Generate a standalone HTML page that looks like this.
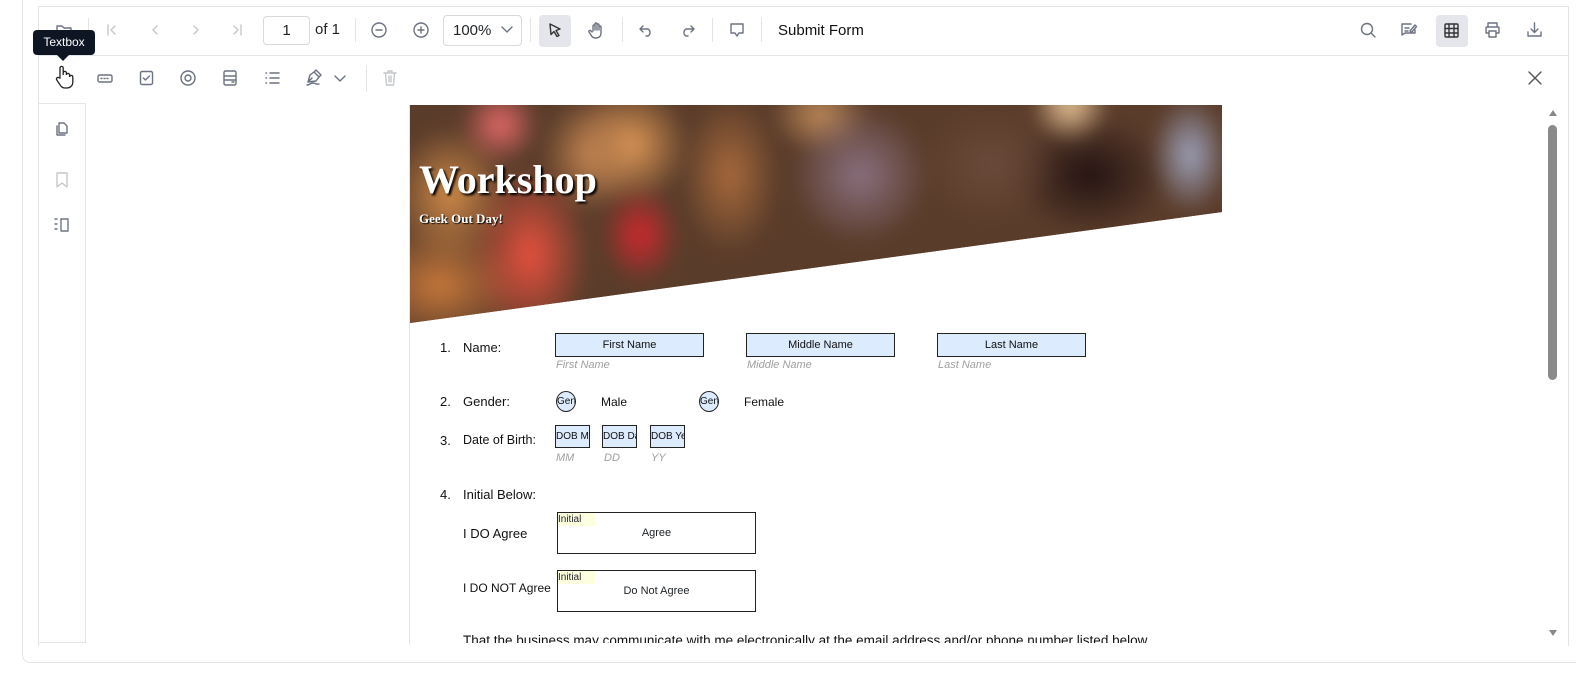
<!DOCTYPE html>
<html style="overflow:hidden"><head><meta charset="utf-8"><style>
*{box-sizing:border-box;margin:0;padding:0}
html,body{width:1576px;height:678px;overflow:hidden}
body{background:#fff;font-family:"Liberation Sans",sans-serif;position:relative;color:#212529}
.a{position:absolute}
.outer{left:22px;top:-10px;width:1554px;height:673px;border:1px solid #e3e4e8;border-right:none;border-radius:8px 0 0 8px}
.viewer{left:38px;top:6px;width:1531px;height:640px;border:1px solid #e3e4e8;border-bottom:none;background:#fff}
.hl{height:1px;background:#e3e4e8}
.vl{width:1px;background:#e3e4e8}
svg{position:absolute}
.ic{stroke:#6b7280;fill:none;stroke-width:1.4;stroke-linecap:round;stroke-linejoin:round}
.dis{stroke:#c4c7cc}
.pdf{font-family:"Liberation Sans",sans-serif;font-size:13px;color:#111}
.fld{position:absolute;background:#dcebfd;border:1px solid #222;font-size:11px;text-align:center;color:#111;white-space:nowrap;overflow:hidden}
.hint{position:absolute;font-size:11px;font-style:italic;color:#a0a0a0}
</style></head><body>
<div class="a outer"></div>
<div class="a viewer"></div>
<div class="a hl" style="left:38px;top:55px;width:1531px"></div>
<div class="a hl" style="left:38px;top:103px;width:48px"></div>
<div class="a vl" style="left:38px;top:103px;height:540px"></div>
<div class="a vl" style="left:85px;top:103px;height:540px"></div>
<div class="a hl" style="left:38px;top:642px;width:48px"></div>

<!-- top toolbar -->
<svg style="left:55px;top:21px" width="18" height="18"><path class="ic" d="M2 5h5l2 2h7v8H2z"/></svg>
<div class="a vl" style="left:88px;top:18px;height:24px"></div>
<svg style="left:104px;top:22px" width="16" height="16"><path class="ic dis" d="M4 3v10M11 4l-4 4 4 4"/></svg>
<svg style="left:147px;top:22px" width="16" height="16"><path class="ic dis" d="M10 4l-4 4 4 4"/></svg>
<svg style="left:188px;top:22px" width="16" height="16"><path class="ic dis" d="M6 4l4 4-4 4"/></svg>
<svg style="left:229px;top:22px" width="16" height="16"><path class="ic dis" d="M5 4l4 4-4 4M12 3v10"/></svg>
<div class="a" style="left:263px;top:16px;width:47px;height:29px;border:1px solid #d7d9dd;border-radius:4px;font-size:15px;text-align:center;line-height:27px">1</div>
<div class="a" style="left:315px;top:21px;font-size:15px">of 1</div>
<div class="a vl" style="left:355px;top:18px;height:24px"></div>
<svg style="left:370px;top:21px" width="18" height="18"><circle class="ic" cx="9" cy="9" r="7"/><path class="ic" d="M6 9h6"/></svg>
<svg style="left:412px;top:21px" width="18" height="18"><circle class="ic" cx="9" cy="9" r="7"/><path class="ic" d="M6 9h6M9 6v6"/></svg>
<div class="a" style="left:443px;top:15px;width:79px;height:31px;border:1px solid #d7d9dd;border-radius:4px;font-size:15px;line-height:29px;padding-left:9px">100%</div>
<svg style="left:500px;top:25px" width="14" height="10"><path class="ic" d="M2 2l5 5 5-5"/></svg>
<div class="a vl" style="left:530px;top:18px;height:24px"></div>
<div class="a" style="left:539px;top:15px;width:32px;height:32px;background:#e5e6ec;border-radius:4px"></div>
<svg style="left:547px;top:22px" width="16" height="18"><path class="ic" style="stroke:#333" d="M3 2l10 5-4 1.5 3 5-2 1-3-5-3 3z"/></svg>
<svg style="left:588px;top:21px" width="18" height="18"><path class="ic" d="M5 10V5a1 1 0 012 0v4V3a1 1 0 012 0v6V4a1 1 0 012 0v5-3a1 1 0 012 0v6c0 3-2 5-5 5s-4-1-5-3l-2-3a1 1 0 012-1l1 1"/></svg>
<div class="a vl" style="left:622px;top:18px;height:24px"></div>
<svg style="left:638px;top:22px" width="16" height="16"><path class="ic" d="M5 4L2 7l3 3M2 7h8a4 4 0 010 7H8"/></svg>
<svg style="left:680px;top:22px" width="16" height="16"><path class="ic" d="M11 4l3 3-3 3M14 7H6a4 4 0 000 7h2"/></svg>
<div class="a vl" style="left:712px;top:18px;height:24px"></div>
<svg style="left:728px;top:21px" width="18" height="18"><path class="ic" d="M3 3h12v9H11l-2 3-2-3H3z"/></svg>
<div class="a vl" style="left:761px;top:18px;height:24px"></div>
<div class="a" style="left:778px;top:22px;font-size:15px;color:#111">Submit Form</div>

<svg style="left:1359px;top:21px" width="18" height="18"><circle class="ic" cx="8" cy="8" r="5.5"/><path class="ic" d="M12 12l4 4"/></svg>
<svg style="left:1400px;top:21px" width="18" height="18"><path class="ic" d="M2 3h9M2 3v11l3-2h10V9M5 7h4M5 10h3M10 10l5-6 1.5 1.5-5 6z"/></svg>
<div class="a" style="left:1436px;top:15px;width:32px;height:32px;background:#e5e6ec;border-radius:4px"></div>
<svg style="left:1443px;top:22px" width="18" height="18"><rect class="ic" style="stroke:#333" x="2" y="2" width="13" height="13" rx="1"/><path class="ic" style="stroke:#333" d="M6 2v13M11 2v13M2 6.5h13M2 11h13"/></svg>
<svg style="left:1484px;top:21px" width="18" height="18"><path class="ic" d="M4 6V2h9v4M3 6h11a1 1 0 011 1v5h-3M5 12H2V7a1 1 0 011-1M5 10h7v6H5z"/></svg>
<svg style="left:1526px;top:21px" width="18" height="18"><path class="ic" d="M8.5 2v9M5 8l3.5 3.5L12 8M2 11v4h13v-4"/></svg>

<!-- second toolbar -->
<svg style="left:52px;top:64px" width="22" height="26"><path d="M8 14V4a1.6 1.6 0 013.2 0v7V9a1.6 1.6 0 013.2 0v2a1.6 1.6 0 013.2 0v2a1.6 1.6 0 013.2 0v5c0 4-3 6-6 6h-2c-3 0-4-2-6-5l-2-3a1.6 1.6 0 012.5-2z" fill="#fff" stroke="#222" stroke-width="1.3"/></svg>
<svg style="left:96px;top:70px" width="18" height="18"><rect class="ic" x="2" y="5" width="14" height="7" rx="1.5"/><path class="ic" d="M5 8.5h1M8 8.5h1M11 8.5h1"/></svg>
<svg style="left:138px;top:69px" width="18" height="18"><rect class="ic" x="2.5" y="2.5" width="12" height="13" rx="1.5"/><path class="ic" d="M5.5 9l2 2 4-4"/></svg>
<svg style="left:179px;top:69px" width="18" height="18"><circle class="ic" cx="9" cy="9" r="7"/><circle class="ic" cx="9" cy="9" r="3"/></svg>
<svg style="left:221px;top:69px" width="18" height="18"><rect class="ic" x="3" y="2" width="12" height="14" rx="1.5"/><path class="ic" d="M3 7h12M3 11h12M11 13h2"/></svg>
<svg style="left:263px;top:69px" width="18" height="18"><path class="ic" d="M7 4h9M7 9h9M7 14h9M3 4h.5M3 9h.5M3 14h.5"/></svg>
<svg style="left:304px;top:68px" width="22" height="20"><path class="ic" d="M4 14l2-7 4-3 5 5-3 4zM10 4l2-2 5 5-2 2M8 10l-4 4M3 17c3 0 3-2 6-2s3 2 6 1"/></svg>
<svg style="left:333px;top:74px" width="14" height="10"><path class="ic" d="M2 2l5 5 5-5"/></svg>
<div class="a vl" style="left:366px;top:66px;height:26px"></div>
<svg style="left:381px;top:69px" width="18" height="18"><path class="ic dis" d="M3 4h12M7 4V2h4v2M4.5 4l1 12h7l1-12M8 7v6M10 7v6"/></svg>
<svg style="left:1526px;top:69px" width="18" height="18"><path class="ic" style="stroke:#555" d="M3 3l12 12M15 3L3 15"/></svg>

<!-- tooltip -->
<div class="a" style="left:33px;top:30px;width:62px;height:25px;background:#0f1623;border-radius:4px;color:#fff;font-size:12px;text-align:center;line-height:25px">Textbox</div>
<div class="a" style="left:57px;top:55px;width:0;height:0;border-left:6px solid transparent;border-right:6px solid transparent;border-top:6px solid #0f1623"></div>

<!-- sidebar icons -->
<svg style="left:53px;top:120px" width="18" height="18"><path class="ic" d="M6 3h5l3 3v7H6zM4 6v9h8"/></svg>
<svg style="left:53px;top:171px" width="18" height="18"><path class="ic dis" d="M4 2h10v14l-5-4-5 4z"/></svg>
<svg style="left:53px;top:216px" width="18" height="18"><path class="ic" d="M2 3h3M2 8h3M2 13h3M8 3h7v12H8z" stroke-dasharray="2 1"/></svg>

<!-- page -->
<div class="a vl" style="left:409px;top:105px;height:540px"></div>
<div class="a" style="left:410px;top:105px;width:812px;height:218px;overflow:hidden;clip-path:polygon(0 0,100% 0,100% 107px,0 218px);background:#5a3c2a">
 <div class="a" style="inset:-20px;filter:blur(8px);background:
 radial-gradient(ellipse 60px 90px at 140px 170px,#e8503e,transparent),
 radial-gradient(ellipse 40px 50px at 250px 150px,#d0282e,transparent),
 radial-gradient(ellipse 40px 40px at 110px 40px,#e86a6a,transparent),
 radial-gradient(ellipse 60px 70px at 60px 110px,#d08a48,transparent),
 radial-gradient(ellipse 50px 60px at 200px 70px,#c08250,transparent),
 radial-gradient(ellipse 60px 60px at 240px 60px,#e09a57,transparent),
 radial-gradient(ellipse 50px 80px at 340px 90px,#a86a3c,transparent),
 radial-gradient(ellipse 70px 70px at 470px 90px,#8a7080,transparent),
 radial-gradient(ellipse 50px 40px at 430px 30px,#c08b5a,transparent),
 radial-gradient(ellipse 70px 60px at 600px 80px,#6a4a3a,transparent),
 radial-gradient(ellipse 40px 40px at 680px 20px,#ecc79a,transparent),
 radial-gradient(ellipse 40px 60px at 800px 70px,#9ea3bd,transparent),
 radial-gradient(ellipse 80px 60px at 700px 90px,#241313,transparent),
 radial-gradient(ellipse 80px 60px at 50px 200px,#c8783a,transparent),
 #5a3c2a"></div>
 <div class="a" style="left:9px;top:51px;font-family:'Liberation Serif',serif;font-weight:bold;font-size:40px;color:#fff;text-shadow:2px 2px 2px #000">Workshop</div>
 <div class="a" style="left:9px;top:106px;font-family:'Liberation Serif',serif;font-weight:bold;font-size:13px;color:#fff;text-shadow:1px 1px 1px #000">Geek Out Day!</div>
</div>

<div class="a pdf" style="left:440px;top:340px">1.</div><div class="a pdf" style="left:463px;top:340px">Name:</div>
<div class="fld" style="left:555px;top:333px;width:149px;height:24px;line-height:23px">First Name</div>
<div class="fld" style="left:746px;top:333px;width:149px;height:24px;line-height:23px">Middle Name</div>
<div class="fld" style="left:937px;top:333px;width:149px;height:24px;line-height:23px">Last Name</div>
<div class="hint" style="left:556px;top:359px">First Name</div>
<div class="hint" style="left:747px;top:359px">Middle Name</div>
<div class="hint" style="left:938px;top:359px">Last Name</div>

<div class="a pdf" style="left:440px;top:394px">2.</div><div class="a pdf" style="left:463px;top:394px">Gender:</div>
<div class="fld" style="left:556px;top:391px;width:20px;height:21px;border-radius:50%;line-height:20px;font-size:10px">Gen</div>
<div class="a pdf" style="left:601px;top:395px;font-size:12px">Male</div>
<div class="fld" style="left:699px;top:391px;width:20px;height:21px;border-radius:50%;line-height:20px;font-size:10px">Gen</div>
<div class="a pdf" style="left:744px;top:395px;font-size:12px">Female</div>

<div class="a pdf" style="left:440px;top:433px">3.</div><div class="a pdf" style="left:463px;top:433px;font-size:12.5px">Date of Birth:</div>
<div class="fld" style="left:555px;top:425px;width:35px;height:23px;line-height:22px;font-size:10px;text-align:left">DOB Mo</div>
<div class="fld" style="left:602px;top:425px;width:35px;height:23px;line-height:22px;font-size:10px;text-align:left">DOB Da</div>
<div class="fld" style="left:650px;top:425px;width:35px;height:23px;line-height:22px;font-size:10px;text-align:left">DOB Ye</div>
<div class="hint" style="left:556px;top:452px">MM</div>
<div class="hint" style="left:604px;top:452px">DD</div>
<div class="hint" style="left:651px;top:452px">YY</div>

<div class="a pdf" style="left:440px;top:487px">4.</div><div class="a pdf" style="left:463px;top:487px">Initial Below:</div>
<div class="a pdf" style="left:463px;top:526px">I DO Agree</div>
<div class="a" style="left:557px;top:512px;width:199px;height:42px;border:1px solid #222"></div>
<div class="a" style="left:558px;top:513px;width:37px;height:13px;background:#fdfde0;font-size:10px;line-height:13px">Initial</div>
<div class="a" style="left:557px;top:527px;width:199px;text-align:center;font-size:11px">Agree</div>
<div class="a pdf" style="left:463px;top:581px;font-size:12px">I DO NOT Agree</div>
<div class="a" style="left:557px;top:570px;width:199px;height:42px;border:1px solid #222"></div>
<div class="a" style="left:558px;top:571px;width:37px;height:13px;background:#fdfde0;font-size:10px;line-height:13px">Initial</div>
<div class="a" style="left:557px;top:585px;width:199px;text-align:center;font-size:11px">Do Not Agree</div>
<div class="a" style="left:410px;top:632px;width:1130px;height:11px;overflow:hidden"><div class="a pdf" style="left:53px;top:1px;white-space:nowrap;font-size:13.5px">That the business may communicate with me electronically at the email address and/or phone number listed below.</div></div>

<!-- scrollbar -->
<div class="a" style="left:1549px;top:110px;width:0;height:0;border-left:4px solid transparent;border-right:4px solid transparent;border-bottom:6px solid #888"></div>
<div class="a" style="left:1548px;top:125px;width:9px;height:255px;background:#8a8a8a;border-radius:5px"></div>
<div class="a" style="left:1549px;top:630px;width:0;height:0;border-left:4px solid transparent;border-right:4px solid transparent;border-top:6px solid #888"></div>
</body></html>
